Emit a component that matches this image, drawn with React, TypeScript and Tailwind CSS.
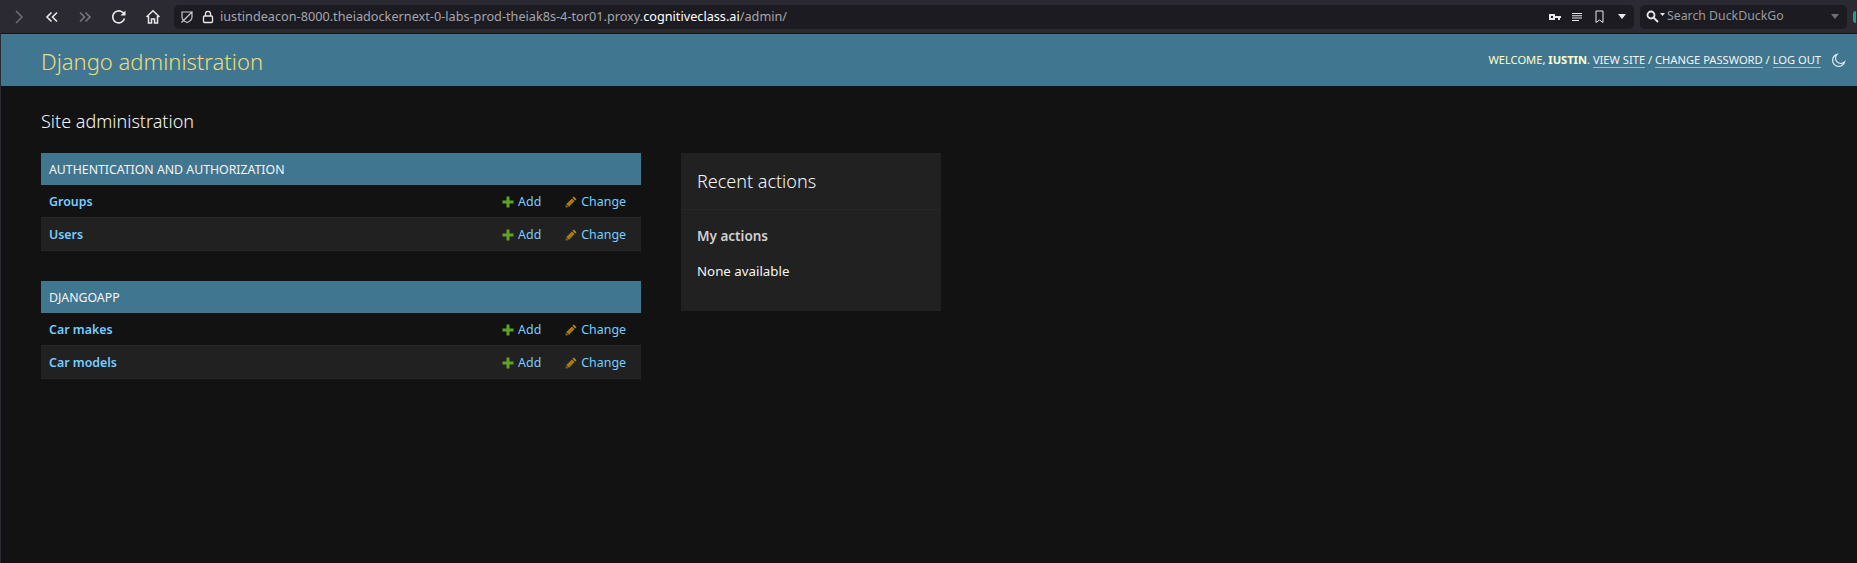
const sans = 'font-["Noto_Sans",sans-serif]'

function Pencil() {
  return (
    <svg width="12" height="12" viewBox="0 0 12 12" className="mr-[4px]">
      <path d="M8.800 0.500l2.700 2.700-1.300 1.300-2.700-2.700z" fill="#b88c12" />
      <path d="M6.900 2.400l2.700 2.700-5.600 5.600-2.700-2.700z" fill="#a67c10" />
      <path d="M1 8.300l2.700 2.700-3.200 0.700z" fill="#7d6114" />
    </svg>
  )
}

function Plus() {
  return (
    <svg width="12" height="12" viewBox="0 0 12 12" className="mr-[4px]">
      <path d="M4.500 0.500h3v4h4v3h-4v4h-3v-4h-4v-3h4z" fill="#5fa225" />
    </svg>
  )
}

function Row({ name, alt }: { name: string; alt?: boolean }) {
  return (
    <div className={`flex h-[33px] items-center border-b border-[#262626] pl-[8px] pr-[15px] pt-[2px] text-[12.4px] text-[#79cdff] ${alt ? 'bg-[#212121]' : 'bg-[#121212]'}`}>
      <span className="font-semibold">{name}</span>
      <span className="ml-auto flex items-center"><Plus />Add</span>
      <span className="ml-[24px] flex items-center"><Pencil />Change</span>
    </div>
  )
}

function Module({ title, rows }: { title: string; rows: string[] }) {
  return (
    <div className="w-[600px]">
      <div className="flex h-[32px] items-center bg-[#417690] pl-[8px] pt-[2px] text-[12.300px] text-[#f5f5f5]">{title}</div>
      <Row name={rows[0]} />
      <Row name={rows[1]} alt />
    </div>
  )
}

function Toolbar() {
  return (
    <div className="flex h-[34px] items-center border-b border-[#15161c] bg-[#2b2a33] text-[#fbfbfe]">
      <svg width="16" height="16" viewBox="0 0 16 16" fill="none" stroke="#6e6e75" strokeWidth="1.5" className="ml-[10px]"><path d="M5 2l6 6-6 6" /></svg>
      <svg width="14" height="12" viewBox="0 0 14 12" fill="none" stroke="#e8e8ea" strokeWidth="1.6" className="ml-[18px]"><path d="M6.500 1.500L2 6l4.500 4.500M12 1.500L7.500 6l4.500 4.500" /></svg>
      <svg width="14" height="12" viewBox="0 0 14 12" fill="none" stroke="#77777e" strokeWidth="1.6" className="ml-[19px]"><path d="M2 1.500L6.500 6 2 10.500M7.500 1.500L12 6l-4.500 4.500" /></svg>
      <svg width="16" height="16" viewBox="0 0 16 16" fill="none" stroke="#e8e8ea" strokeWidth="1.6" className="ml-[19px]"><path d="M13.500 9.500A6 6 0 1 1 11.500 3.200L14 5" /><path d="M14.500 1.500v5h-5z" fill="#e8e8ea" stroke="none" /></svg>
      <svg width="16" height="16" viewBox="0 0 16 16" fill="none" stroke="#e8e8ea" strokeWidth="1.500" className="ml-[18px]"><path d="M1.500 8L8 1.800 14.500 8M3.500 7v7h3V10h3v4h3V7" /></svg>
      <div className={`ml-[13px] flex h-[24px] w-[1460px] items-center rounded-[5px] bg-[#1c1b22] text-[12.700px] ${sans}`}>
        <svg width="14" height="14" viewBox="0 0 14 14" fill="none" stroke="#c8c8cc" strokeWidth="1.200" className="ml-[6px]"><path d="M2 2h10v5c0 3-2.500 4.500-5 5.500C4.500 11.500 2 10 2 7zM1.500 12.500l11-11" /></svg>
        <svg width="12" height="14" viewBox="0 0 12 14" fill="none" stroke="#e8e8ea" strokeWidth="1.300" className="ml-[8px]"><rect x="1.500" y="6" width="9" height="6.500" rx="1" /><path d="M3.500 6V3.800a2.500 2.500 0 0 1 5 0V6" /></svg>
        <span className="ml-[6px] text-[#a5a5ab]">iustindeacon-8000.theiadockernext-0-labs-prod-theiak8s-4-tor01.proxy.<span className="text-white">cognitiveclass.ai</span>/admin/</span>
        <svg width="12" height="8" viewBox="0 0 12 8" className="ml-auto" fill="#e8e8ea"><path d="M0 1h6v2h6v2h-1v2H9V5H6v2H0zM2 3v2h2V3z" fillRule="evenodd" /></svg>
        <svg width="11" height="8" viewBox="0 0 11 8" className="ml-[11px]" fill="#e8e8ea"><path d="M0 0h10v1H0zM0 2.300h10v1H0zM0 4.600h10v1H0zM0 6.900h7v1H0z" /></svg>
        <svg width="9" height="14" viewBox="0 0 9 14" className="ml-[12px]" fill="none" stroke="#e8e8ea" strokeWidth="1"><path d="M1 1h7v11.500l-3.500-2.500L1 12.500z" /></svg>
        <svg width="8" height="5" viewBox="0 0 8 5" className="ml-[14px] mr-[8px]" fill="#e8e8ea"><path d="M0 0h8L4 5z" /></svg>
      </div>
      <div className={`ml-[6px] flex h-[24px] w-[207px] items-center rounded-[5px] bg-[#1c1b22] text-[12.300px] text-[#9a9aa0] ${sans}`}>
        <svg width="14" height="13" viewBox="0 0 14 13" fill="none" stroke="#e8e8ea" strokeWidth="1.800" className="ml-[6px]"><circle cx="5" cy="5" r="3.500" /><path d="M7.500 7.500L12 12" /></svg>
        <svg width="5" height="3" viewBox="0 0 5 3" className="mb-[5px]" fill="#e8e8ea"><path d="M0 0h5L2.500 3z" /></svg>
        <span className="ml-[2px]">Search DuckDuckGo</span>
        <svg width="8" height="5" viewBox="0 0 8 5" className="ml-auto mr-[8px]" fill="#6e6e75"><path d="M0 0h8L4 5z" /></svg>
      </div>
      <div className="ml-[6px] h-[12px] w-[3px] rounded-l-full bg-[#1aa38a]" />
    </div>
  )
}

export default function App() {
  return (
    <div className={`flex h-[563px] w-[1857px] flex-col overflow-hidden border-l border-[#2b2a33] bg-[#121212] ${sans}`}>
      <Toolbar />

      {/* Header */}
      <div className="flex h-[52px] items-center bg-[#417690] pl-[40px] pr-[11px]">
        <span className="pt-[2px] text-[22px] font-light text-[#ecdc7c]">Django administration</span>
        <div className="ml-auto flex items-center pt-[1px] text-[11.150px] uppercase text-[#ffffcc]">
          <span>Welcome, <b>iustin</b>.&nbsp;</span>
          <span className="border-b border-[#9fbccb] leading-[14px] text-[#f5f5f5]">View site</span>
          <span>&nbsp;/&nbsp;</span>
          <span className="border-b border-[#9fbccb] leading-[14px] text-[#f5f5f5]">Change password</span>
          <span>&nbsp;/&nbsp;</span>
          <span className="border-b border-[#9fbccb] leading-[14px] text-[#f5f5f5]">Log out</span>
          <svg width="15" height="15" viewBox="0 0 16 16" fill="none" stroke="#e6edf0" strokeWidth="1.200" className="ml-[10px]"><path d="M6.500 1.500a6.500 6.500 0 1 0 8 8 5.500 5.500 0 0 1-8-8z" /></svg>
        </div>
      </div>

      {/* Content */}
      <div className="pl-[40px]">
        <h1 className="mt-[20px] h-[30px] text-[18px] font-light leading-[30px] text-[#f5f5f5]">Site administration</h1>
        <div className="mt-[17px] flex items-start gap-[40px]">
          <div className="flex flex-col gap-[30px]">
            <Module title="AUTHENTICATION AND AUTHORIZATION" rows={['Groups', 'Users']} />
            <Module title="DJANGOAPP" rows={['Car makes', 'Car models']} />
          </div>
          <div className="h-[158px] w-[260px] bg-[#212121] text-[#f5f5f5]">
            <div className="flex h-[57px] items-center border-b border-[#262626] pl-[16px] text-[18px] font-light">Recent actions</div>
            <div className="mt-[16px] pl-[16px] text-[13.500px] font-semibold text-[#d0d0d0]">My actions</div>
            <div className="mt-[16px] pl-[16px] text-[13.300px]">None available</div>
          </div>
        </div>
      </div>
    </div>
  )
}
